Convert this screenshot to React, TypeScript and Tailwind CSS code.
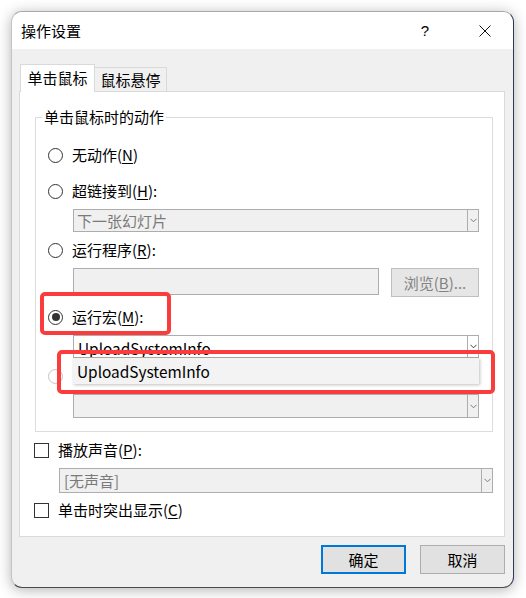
import React from "react";

function Radio({ checked = false, faint = false }: { checked?: boolean; faint?: boolean }) {
  return (
    <span
      className={
        "flex h-[15px] w-[15px] shrink-0 items-center justify-center rounded-full border bg-white " +
        (faint ? "border-[#c4c4c4]" : "border-[#333333]")
      }
    >
      {checked && <span className="h-[8px] w-[8px] rounded-full bg-[#333333]" />}
    </span>
  );
}

function Check() {
  return <span className="h-[15px] w-[15px] shrink-0 border border-[#333333] bg-white" />;
}

function Chevron({ color = "#606060" }: { color?: string }) {
  return (
    <svg width="7" height="5" viewBox="0 0 7 5" className="block">
      <polyline points="0.5,0.8 3.5,3.8 6.5,0.8" fill="none" stroke={color} strokeWidth="1" />
    </svg>
  );
}

function Combo({
  text,
  disabled = true,
  h,
  textClass = "",
}: {
  text?: string;
  disabled?: boolean;
  h: string;
  textClass?: string;
}) {
  return (
    <div
      className={
        "flex border border-[#adadad] " + h + " " + (disabled ? "bg-[#f0f0f0]" : "bg-white")
      }
    >
      <div
        className={
          "flex flex-1 items-center overflow-hidden pl-[3px] " +
          (disabled ? "text-[#7a7a7a] " : "text-black ") +
          textClass
        }
      >
        {text}
      </div>
      <div className="flex w-[11px] items-center justify-center border-l border-[#adadad]">
        <Chevron color={disabled ? "#7a7a7a" : "#404040"} />
      </div>
    </div>
  );
}

function U({ children }: { children: React.ReactNode }) {
  return <span className="underline decoration-1 underline-offset-[2px]">{children}</span>;
}

export default function App() {
  return (
    <div className="min-h-[598px] bg-white pl-[11px] pt-[11px] font-[family-name:'Noto_Sans_CJK_SC','Noto_Sans',sans-serif] text-[15px] leading-[20px] text-black">
      <div className="flex h-[577px] w-[503px] flex-col overflow-hidden rounded-[11px] border border-t-[#a8a8a8] border-l-[#c4c4c4] border-r-[#2e3a55] border-b-[#4a4a4a] bg-[#f0f0f0] shadow-[0_2px_14px_rgba(0,0,0,0.3)]">
        {/* Title bar */}
        <div className="flex h-[37px] shrink-0 items-center bg-white pl-[9px]">
          <span className="pt-[1px]">操作设置</span>
          <span className="ml-auto pt-[1px] font-['Liberation_Sans',sans-serif] text-[15px]">?</span>
          <svg width="12" height="12" viewBox="0 0 12 12" className="ml-[50px] mr-[22px]">
            <line x1="0.5" y1="0.5" x2="11.5" y2="11.5" stroke="#111" strokeWidth="1" />
            <line x1="11.5" y1="0.5" x2="0.5" y2="11.5" stroke="#111" strokeWidth="1" />
          </svg>
        </div>

        {/* Body */}
        <div className="flex flex-1 flex-col pl-[7px] pr-[8px]">
          {/* Tabs */}
          <div className="mt-[15px] flex items-end pl-[1px]">
            <div className="relative z-10 -mb-[1px] flex h-[28px] w-[75px] items-start justify-center border-l border-r border-t border-[#d9d9d9] bg-white pt-[3px]">
              单击鼠标
            </div>
            <div className="flex h-[24px] w-[72px] items-start justify-center border-r border-t border-[#d9d9d9] bg-[#f0f0f0] pt-[2px]">
              鼠标悬停
            </div>
          </div>

          {/* Panel */}
          <div className="flex flex-col border border-[#d9d9d9] bg-white">
            <fieldset className="relative ml-[15px] mr-[11px] mt-[15px] border border-[#dcdcdc] p-0">
              <legend className="ml-[6px] px-[2px] leading-[20px]">单击鼠标时的动作</legend>
              <div className="flex flex-col pb-[13px] pl-[12px] pr-[13px] pt-[16px]">
                <div className="flex h-[24px] items-center gap-[9px]">
                  <Radio />
                  <span>
                    无动作(<U>N</U>)
                  </span>
                </div>
                <div className="mt-[12px] flex h-[24px] items-center gap-[9px]">
                  <Radio />
                  <span>
                    超链接到(<U>H</U>):
                  </span>
                </div>
                <div className="ml-[25px] mt-[6px]">
                  <Combo text="下一张幻灯片" h="h-[23px]" />
                </div>
                <div className="mt-[6px] flex h-[24px] items-center gap-[9px]">
                  <Radio />
                  <span>
                    运行程序(<U>R</U>):
                  </span>
                </div>
                <div className="ml-[25px] mt-[6px] flex items-start gap-[12px]">
                  <div className="h-[27px] w-[306px] border border-[#adadad] bg-[#f0f0f0]" />
                  <div className="flex h-[29px] flex-1 items-center justify-center border border-[#bfbfbf] bg-[#e6e6e6] text-[#838383]">
                    浏览(<U>B</U>)...
                  </div>
                </div>
                <div className="mt-[8px] flex h-[24px] items-center gap-[9px]">
                  <Radio checked />
                  <span>
                    运行宏(<U>M</U>):
                  </span>
                </div>
                <div className="ml-[25px] mt-[6px]">
                  <Combo text="UploadSystemInfo" disabled={false} h="h-[23px]" textClass="pl-[4px] pt-[2px] text-[15.4px]" />
                </div>
                <div className="mt-[6px] flex h-[24px] items-center gap-[9px]">
                  <Radio faint />
                </div>
                <div className="ml-[25px] mt-[6px]">
                  <Combo h="h-[24px]" />
                </div>
              </div>

              {/* Dropdown popup list */}
              <div className="absolute left-[37px] top-[231px] flex h-[26px] w-[406px] items-center bg-[#f3f3f3] pl-[4px] text-[15.4px] shadow-[1px_1px_3px_rgba(0,0,0,0.25)]">
                UploadSystemInfo
              </div>

              {/* Red annotation boxes */}
              <div className="absolute left-[4px] top-[165px] h-[43px] w-[131px] rounded-[5px] border-4 border-[#fa3c3c]" />
              <div className="absolute left-[21px] top-[223px] h-[44px] w-[438px] rounded-[5px] border-4 border-[#fa3c3c]" />
            </fieldset>

            <div className="flex flex-col pb-[14px] pl-[14px] pr-[11px]">
              <div className="mt-[6px] flex h-[24px] items-center gap-[9px]">
                <Check />
                <span>
                  播放声音(<U>P</U>):
                </span>
              </div>
              <div className="ml-[25px] mt-[6px]">
                <Combo text="[无声音]" h="h-[25px]" textClass="pl-[4px]" />
              </div>
              <div className="mt-[5px] flex h-[24px] items-center gap-[9px]">
                <Check />
                <span>
                  单击时突出显示(<U>C</U>)
                </span>
              </div>
            </div>
          </div>

          {/* Buttons */}
          <div className="mt-[8px] flex justify-end gap-[14px]">
            <div className="flex h-[29px] w-[85px] items-center justify-center border-2 border-[#0078d7] bg-[#e1e1e1]">
              确定
            </div>
            <div className="flex h-[29px] w-[85px] items-center justify-center border border-[#adadad] bg-[#e1e1e1]">
              取消
            </div>
          </div>
        </div>
      </div>
    </div>
  );
}
